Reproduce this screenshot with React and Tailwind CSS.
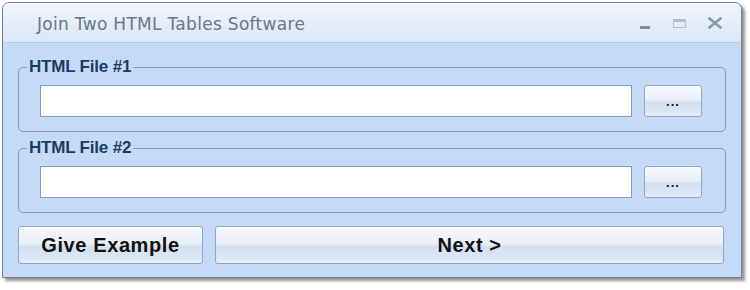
import React from 'react';

function GlassButton({ children, className = '' }) {
  return (
    <button
      type="button"
      className={
        'flex items-center justify-center rounded-[3px] border border-[#8ea6c4] bg-[linear-gradient(to_bottom,#f6f9fd_0%,#e9f0f9_45%,#d3e0f0_55%,#dae6f4_85%,#e6eef9_100%)] shadow-[inset_0_1px_0_#ffffff] text-[#111] font-bold ' +
        className
      }
    >
      {children}
    </button>
  );
}

function FileGroup({ label }) {
  return (
    <fieldset className="h-[74px] rounded-[5px] border border-[#7f9cc0] px-0">
      <legend className="ml-[8px] px-[2px] text-[17px] leading-[18px] font-bold tracking-[-0.2px] text-[#1c3a66] font-['Liberation_Sans',Arial,sans-serif]">
        {label}
      </legend>
      <div className="flex items-center gap-[12px] pl-[21px] pt-[9px]">
        <input
          type="text"
          className="h-[32px] w-[592px] border border-[#7f9dbf] bg-white outline-none"
        />
        <GlassButton className="h-[32px] w-[58px] text-[13px] leading-none tracking-[1px] font-['Liberation_Sans',Arial,sans-serif]">
          ...
        </GlassButton>
      </div>
    </fieldset>
  );
}

export default function App() {
  return (
    <div className="w-[750px] h-[290px] bg-white pl-[2px] pt-[2px]">
      <div className="flex h-[276px] w-[740px] flex-col overflow-hidden rounded-t-[7px] border border-[#6e8093] bg-[#c4daf6] shadow-[3px_3px_3px_rgba(60,60,60,0.55)]">
        {/* title bar */}
        <div className="flex h-[40px] shrink-0 items-center border-b border-[#b8cce6] bg-[linear-gradient(to_bottom,#f0f5fc,#dae7f7)] pl-[34px] pr-[18px]">
          <span className="flex-1 pt-[4px] text-[17px] tracking-[0.3px] text-[#6b7684] font-['DejaVu_Sans',Verdana,sans-serif]">
            Join Two HTML Tables Software
          </span>
          <div className="flex items-center gap-[21px] pt-[3px]">
            <svg width="12" height="14" viewBox="0 0 12 14">
              <rect x="1" y="9" width="10" height="3" fill="#7e8ea2" />
            </svg>
            <svg width="14" height="14" viewBox="0 0 14 14">
              <rect x="1.5" y="2.5" width="12" height="8" fill="none" stroke="#b2c0d1" />
              <rect x="1.5" y="2.5" width="12" height="2.5" fill="#b2c0d1" />
            </svg>
            <svg width="16" height="14" viewBox="0 0 16 14">
              <path d="M2.5 1.5 L13.5 10.5 M13.5 1.5 L2.5 10.5" stroke="#8a99ac" strokeWidth="2.6" strokeLinecap="square" />
            </svg>
          </div>
        </div>

        {/* body */}
        <div className="flex flex-1 flex-col px-[15px] pt-[15px]">
          <FileGroup label="HTML File #1" />
          <div className="h-[7px]" />
          <FileGroup label="HTML File #2" />
          <div className="flex gap-[12px] pt-[13px]">
            <GlassButton className="h-[38px] w-[185px] text-[20px] tracking-[0.6px] font-['Liberation_Sans',Arial,sans-serif]">
              Give Example
            </GlassButton>
            <GlassButton className="h-[38px] w-[509px] text-[20px] tracking-[0.6px] font-['Liberation_Sans',Arial,sans-serif]">
              Next &gt;
            </GlassButton>
          </div>
        </div>
      </div>
    </div>
  );
}
